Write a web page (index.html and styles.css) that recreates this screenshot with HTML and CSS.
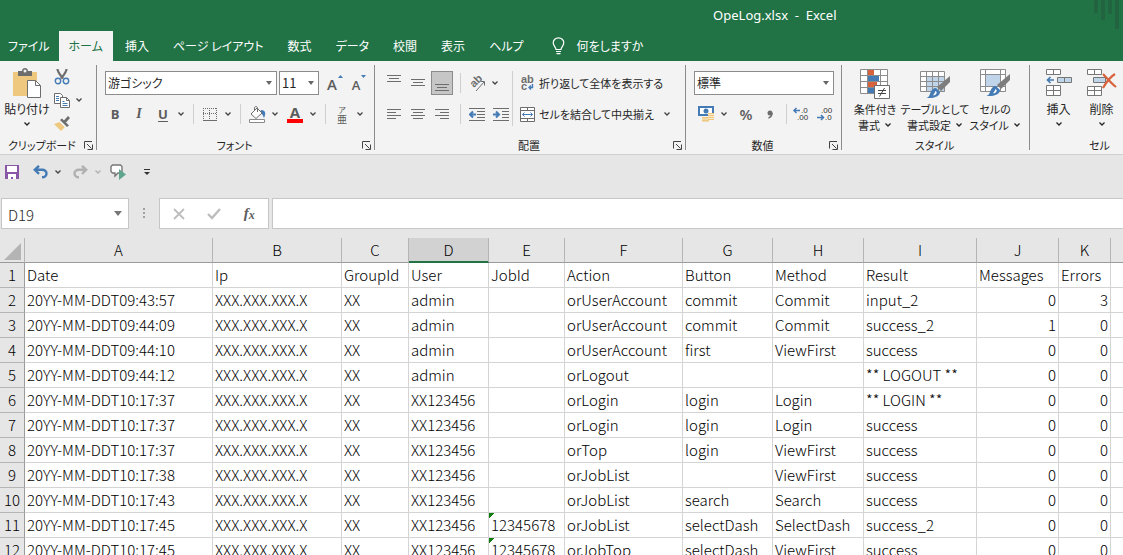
FILE: index.html
```html
<!DOCTYPE html>
<html lang="ja">
<head>
    <meta charset="UTF-8">
    <meta name="viewport" content="width=device-width, initial-scale=1.0">
    <title>OpeLog.xlsx - Excel</title>
    <link rel="stylesheet" href="styles.css">
</head>
<body>
    <!-- shared icons -->
    <svg class="defs" width="0" height="0">
        <symbol id="chev" viewBox="0 0 8 6"><path d="M1.500 1.500L4 4l2.500-2.500" fill="none" stroke="currentColor" stroke-width="1.300"/></symbol>
        <symbol id="launch" viewBox="0 0 9 9"><path d="M.5 7.500V.5H8M3 3l4.500 4.500M8.500 3.500v5H3.500" fill="none" stroke="#444"/></symbol>
        <symbol id="brush" viewBox="0 0 24 24">
            <path d="M24 1v6l-9 9-4-4z" fill="#7d7d7d"/>
            <path d="M10 13l4 4c0 4-5 6.500-13.500 6 3-1 3-3 4-5.500 1-2.500 3-4.500 5.500-4.500z" fill="#447bb5"/>
            <path d="M9.500 16c1.800.8 1.500 3-.5 4-.8.4-1.500.4-2 .2 1.200-1 1.700-2.400 2.500-4.200z" fill="#fff"/>
        </symbol>
    </svg>

    <header class="title-bar">
        <h1>OpeLog.xlsx&nbsp; -&nbsp; Excel</h1>
        <svg class="motif" width="29" height="30" viewBox="0 0 29 30"><path d="M0 0h4v13H0zM7 0h4v20H7zM14 0h4v14h-4zM21 0h4v29h-4z" fill="#22643f"/></svg>
    </header>

    <nav class="tabs">
        <button class="tab file">ファイル</button>
        <button class="tab active">ホーム</button>
        <button class="tab">挿入</button>
        <button class="tab">ページ レイアウト</button>
        <button class="tab">数式</button>
        <button class="tab">データ</button>
        <button class="tab">校閲</button>
        <button class="tab">表示</button>
        <button class="tab">ヘルプ</button>
        <button class="tab tell">
            <svg width="13" height="18" viewBox="0 0 13 18" fill="none" stroke="#fff" stroke-width="1.200"><path d="M4 12.500c0-2.500-2.800-3.500-2.800-6.700a5.300 5 0 0 1 10.600 0c0 3.200-2.800 4.200-2.800 6.700zM4 14.500h5M4.500 16.700h4"/></svg>
            何をしますか
        </button>
    </nav>

    <div class="ribbon">
        <section class="group clipboard">
            <div class="group-body">
                <button class="big">
                    <svg width="30" height="32" viewBox="0 0 30 32">
                        <path d="M1 4h24v24H1z" fill="#edc87e"/>
                        <path d="M6 3h4c0-4 6-4 6 0h4v5H6z" fill="#6d6d6d"/><circle cx="13" cy="3" r="1.500" fill="#f3f3f3"/>
                        <path d="M15.500 12.500h8l5 5v12h-13z" fill="#fff" stroke="#6d6d6d"/><path d="M23.500 12.500v5h5" fill="none" stroke="#6d6d6d"/>
                    </svg>
                    <span>貼り付け</span>
                    <svg class="chev"><use href="#chev"/></svg>
                </button>
                <div class="clip-side">
                    <button class="icon" aria-label="切り取り">
                        <svg width="16" height="16" viewBox="0 0 16 16"><path d="M3.500 0c0 3 2 5 5.500 9.500M12.500 0c0 3-2 5-5.500 9.500" fill="none" stroke="#6d6d6d" stroke-width="2.200"/><g fill="none" stroke="#447bb5" stroke-width="1.400"><circle cx="4" cy="12" r="2.700"/><circle cx="12" cy="12" r="2.700"/></g></svg>
                    </button>
                    <button class="icon" aria-label="コピー">
                        <svg width="16" height="15" viewBox="0 0 16 15"><g fill="#fff" stroke="#6d6d6d"><path d="M.5.5h6l2 2v8h-8z"/><path d="M6.500 4.500h6l3 3v7h-9z"/><path d="M12.500 4.500v3h3" fill="none"/></g><path d="M2 3.500h3M2 5.500h3M2 7.500h3M8.500 8.500h2M8.500 10.500h5M8.500 12.500h5" stroke="#447bb5"/></svg>
                    </button>
                    <button class="drop" aria-label="コピーのオプション"><svg class="chev"><use href="#chev"/></svg></button>
                    <button class="icon" aria-label="書式のコピー">
                        <svg width="16" height="15" viewBox="0 0 16 15"><path d="M0 8l6-2 5 5-4 4z" fill="#edc87e"/><path d="M6 4l2-1.500 7 7L13 11z" fill="#6d6d6d"/><path d="M9.500 5L14 0l2 2-4.500 5z" fill="#6d6d6d"/><path d="M5.500 5.500l6 6" stroke="#f3f3f3"/></svg>
                    </button>
                </div>
            </div>
            <footer><span>クリップボード</span><button aria-label="クリップボードの設定"><svg width="9" height="9"><use href="#launch"/></svg></button></footer>
        </section>

        <section class="group font">
            <div class="group-body rows">
                <div class="row">
                    <div class="combo family"><select aria-label="フォント名"><option>游ゴシック</option></select></div>
                    <div class="combo size"><select aria-label="フォント サイズ"><option>11</option></select></div>
                    <button class="icon letter grow" aria-label="フォント サイズの拡大"><b>A</b><svg width="5" height="3" viewBox="0 0 5 3"><path d="M0 3l2.500-3L5 3z" fill="#447bb5"/></svg></button>
                    <button class="icon letter shrink" aria-label="フォント サイズの縮小"><b>A</b><svg width="5" height="3" viewBox="0 0 5 3"><path d="M0 0h5L2.500 3z" fill="#447bb5"/></svg></button>
                </div>
                <div class="row format">
                    <button class="icon bold">B</button>
                    <button class="icon italic">I</button>
                    <button class="icon underline">U</button>
                    <button class="drop" aria-label="下線"><svg class="chev"><use href="#chev"/></svg></button>
                    <i class="sep"></i>
                    <button class="icon" aria-label="罫線"><svg width="14" height="13" viewBox="0 0 14 13" fill="none" stroke="#6d6d6d"><path d="M0 .5h14M.5 0v11M6.500 0v11M13.500 0v11M0 5.500h14" stroke-dasharray="1 1"/><path d="M0 12.500h14"/></svg></button>
                    <button class="drop" aria-label="罫線の種類"><svg class="chev"><use href="#chev"/></svg></button>
                    <i class="sep"></i>
                    <button class="icon" aria-label="塗りつぶしの色"><svg width="17" height="17" viewBox="0 0 17 17"><path d="M12 4c5 0 5 4 3 8-1-2-1-4-4-5z" fill="#447bb5"/><path d="M2 8l6-6 5 5-6 5.500z" fill="#fff" stroke="#6d6d6d"/><path d="M5.500 5V2c0-2 3-2 3 0v4" fill="none" stroke="#6d6d6d"/><path d="M.5 13.500h15v3H.5z" fill="#fff" stroke="#8a8a8a"/></svg></button>
                    <button class="drop" aria-label="塗りつぶしの色の一覧"><svg class="chev"><use href="#chev"/></svg></button>
                    <button class="icon font-color">A</button>
                    <button class="drop" aria-label="フォントの色"><svg class="chev"><use href="#chev"/></svg></button>
                    <i class="sep"></i>
                    <button class="icon ruby"><small>ア</small><span>亜</span></button>
                    <button class="drop" aria-label="ふりがな"><svg class="chev"><use href="#chev"/></svg></button>
                </div>
            </div>
            <footer><span>フォント</span><button aria-label="フォントの設定"><svg width="9" height="9"><use href="#launch"/></svg></button></footer>
        </section>

        <section class="group align">
            <div class="group-body">
                <div class="rows align-left">
                    <div class="row">
                        <button class="icon" aria-label="上揃え"><svg width="14" height="20" viewBox="0 0 14 20" stroke="#6d6d6d"><path d="M0 2.500h14M2 5.500h10M0 8.500h14"/></svg></button>
                        <button class="icon" aria-label="上下中央揃え"><svg width="14" height="20" viewBox="0 0 14 20" stroke="#6d6d6d"><path d="M0 6.500h14M2 9.500h10M0 12.500h14"/></svg></button>
                        <button class="icon pressed" aria-label="下揃え" aria-pressed="true"><svg width="14" height="20" viewBox="0 0 14 20" stroke="#6d6d6d"><path d="M0 11.500h14M2 14.500h10M0 17.500h14"/></svg></button>
                        <i class="sep"></i>
                        <button class="icon" aria-label="方向"><svg class="lettering" width="17" height="17" viewBox="0 0 17 17"><text x="0" y="0" transform="translate(5 13) rotate(-45)" font-size="11" font-weight="700" fill="#6d6d6d">ab</text><path d="M7 16L15 7M11.500 6.500h4v4" fill="none" stroke="#6d6d6d"/></svg></button>
                        <button class="drop" aria-label="方向の一覧"><svg class="chev"><use href="#chev"/></svg></button>
                    </div>
                    <div class="row">
                        <button class="icon" aria-label="左揃え"><svg width="14" height="11" viewBox="0 0 14 11" stroke="#6d6d6d"><path d="M0 .5h14M0 3.500h9M0 6.500h14M0 9.500h9"/></svg></button>
                        <button class="icon" aria-label="中央揃え"><svg width="14" height="11" viewBox="0 0 14 11" stroke="#6d6d6d"><path d="M0 .5h14M2 3.500h10M0 6.500h14M2 9.500h10"/></svg></button>
                        <button class="icon" aria-label="右揃え"><svg width="14" height="11" viewBox="0 0 14 11" stroke="#6d6d6d"><path d="M0 .5h14M5 3.500h9M0 6.500h14M5 9.500h9"/></svg></button>
                        <i class="sep"></i>
                        <button class="icon" aria-label="インデントを減らす"><svg width="16" height="13" viewBox="0 0 16 13"><path d="M0 .5h16M8 3.500h8M8 6.500h8M8 9.500h8M0 12.500h16" stroke="#6d6d6d"/><path d="M7 6.500H1M4 3.500l-3 3 3 3" fill="none" stroke="#447bb5" stroke-width="2"/></svg></button>
                        <button class="icon" aria-label="インデントを増やす"><svg width="16" height="13" viewBox="0 0 16 13"><path d="M0 .5h16M9 3.500h7M9 6.500h7M9 9.500h7M0 12.500h16" stroke="#6d6d6d"/><path d="M0 6.500h6M3 3.500l3 3-3 3" fill="none" stroke="#447bb5" stroke-width="2"/></svg></button>
                    </div>
                </div>
                <i class="sep tall"></i>
                <div class="rows">
                    <div class="row"><button class="wide"><svg class="lettering" width="15" height="16" viewBox="0 0 15 16"><g font-size="11" font-weight="700" fill="#6d6d6d"><text x="1" y="8">ab</text><text x="1" y="15">c</text></g><path d="M12.500 9v3.500H9M11 10.500l-2 2 2 2" fill="none" stroke="#447bb5" stroke-width="1.400"/></svg>折り返して全体を表示する</button></div>
                    <div class="row"><button class="wide"><svg width="15" height="15" viewBox="0 0 15 15"><path d="M.5.5h14v14H.5zM.5 3.500h14M.5 11.500h14M7.500 .5v3M7.500 11.500v3" fill="#fff" stroke="#6d6d6d"/><path d="M2.500 7.500h10M4.500 5.500l-2 2 2 2M10.500 5.500l2 2-2 2" fill="none" stroke="#447bb5"/></svg>セルを結合して中央揃え</button><button class="drop merge-drop" aria-label="結合の種類"><svg class="chev"><use href="#chev"/></svg></button></div>
                </div>
            </div>
            <footer><span>配置</span><button aria-label="配置の設定"><svg width="9" height="9"><use href="#launch"/></svg></button></footer>
        </section>

        <section class="group number">
            <div class="group-body rows">
                <div class="row"><div class="combo format-name"><select aria-label="表示形式"><option>標準</option></select></div></div>
                <div class="row">
                    <button class="icon" aria-label="通貨表示形式"><svg width="17" height="16" viewBox="0 0 17 16"><path d="M1 1h14v8H1z" fill="#fff" stroke="#447bb5" stroke-width="2"/><circle cx="8" cy="5" r="2.500" fill="#447bb5"/><path d="M10 7h6v7h-6zM4 11h7v4.500H4z" fill="#edc87e"/><path d="M10 8.500h6M10 10.500h6M10 12.500h6M4 13h6" stroke="#f8eacb"/></svg></button>
                    <button class="drop" aria-label="通貨の一覧"><svg class="chev"><use href="#chev"/></svg></button>
                    <button class="icon percent">%</button>
                    <button class="icon comma" aria-label="桁区切りスタイル"><svg width="6" height="9" viewBox="0 0 6 9"><circle cx="3" cy="3" r="2.500" fill="#6d6d6d"/><path d="M5 3c0 3-1 4-3.500 5" fill="none" stroke="#6d6d6d" stroke-width="1.500"/></svg></button>
                    <i class="sep"></i>
                    <button class="icon" aria-label="小数点以下の表示桁数を増やす"><svg class="lettering" width="16" height="14" viewBox="0 0 16 14"><g font-size="8" fill="#333"><text x="8" y="6">.0</text><text x="4" y="13">.00</text></g><path d="M7 3.500H1M3.500 1L1 3.500 3.500 6" fill="none" stroke="#447bb5" stroke-width="1.500"/></svg></button>
                    <button class="icon" aria-label="小数点以下の表示桁数を減らす"><svg class="lettering" width="16" height="14" viewBox="0 0 16 14"><g font-size="8" fill="#333"><text x="4" y="6">.00</text><text x="8" y="13">.0</text></g><path d="M0 10.500h6.500M4 8l2.500 2.500L4 13" fill="none" stroke="#447bb5" stroke-width="1.500"/></svg></button>
                </div>
            </div>
            <footer><span>数値</span><button aria-label="数値の設定"><svg width="9" height="9"><use href="#launch"/></svg></button></footer>
        </section>

        <section class="group style">
            <div class="group-body">
                <button class="big cond">
                    <svg width="30" height="32" viewBox="0 0 30 32">
                        <path d="M.5 1.500h27v24H.5z" fill="#fff"/>
                        <path d="M8 2h6v5H8zM8 14h9v5H8z" fill="#d8623c"/><path d="M8 8h11v5H8zM8 20h6v5H8z" fill="#447bb5"/>
                        <path d="M.5 1.500h27v24H.5zM.5 7.500h27M.5 13.500h27M.5 19.500h27M7.500 1.500v24M20.500 1.500v24" fill="none" stroke="#8c8c8c"/>
                        <path d="M14.500 17.500h15v13h-15z" fill="#fff" stroke="#6d6d6d"/><path d="M18 22.500h8M18 25.500h8M24.500 20l-5 8.500" stroke="#444"/>
                    </svg>
                    <span>条件付き</span><span>書式<svg class="chev"><use href="#chev"/></svg></span>
                </button>
                <button class="big table-fmt">
                    <svg width="30" height="32" viewBox="0 0 30 32">
                        <path d="M.5 3.500h24v20H.5z" fill="#fff"/><path d="M7 9h18v15H7z" fill="#c0d4ea"/>
                        <path d="M.5 3.500h24v20H.5zM.5 8.500h24M.5 13.500h24M.5 18.500h24M6.500 3.500v20M12.500 3.500v20M18.500 3.500v20" fill="none" stroke="#8c8c8c"/>
                        <use href="#brush" x="6" y="7" width="24" height="24"/>
                    </svg>
                    <span>テーブルとして</span><span>書式設定<svg class="chev"><use href="#chev"/></svg></span>
                </button>
                <button class="big cell-fmt">
                    <svg width="30" height="32" viewBox="0 0 30 32">
                        <path d="M.5 1.500h25v22H.5z" fill="#fff"/><path d="M6 7h14v11H6z" fill="#c0d4ea"/>
                        <path d="M.5 1.500h25v22H.5zM.5 6.500h25M.5 18.500h25M5.500 1.500v22M20.500 1.500v22" fill="none" stroke="#8c8c8c"/>
                        <use href="#brush" x="6" y="5" width="24" height="24"/>
                    </svg>
                    <span>セルの</span><span>スタイル<svg class="chev"><use href="#chev"/></svg></span>
                </button>
            </div>
            <footer><span>スタイル</span></footer>
        </section>

        <section class="group cells">
            <div class="group-body">
                <button class="big">
                    <svg width="28" height="32" viewBox="0 0 28 32"><g fill="#fff" stroke="#777"><path d="M1.500 1.500h14v5h-14zM8.500 1.500v5M1.500 17.500h14v10h-14zM8.500 17.500v10M1.500 22.500h14"/><path d="M12.500 9.500h14v5h-14zM19.500 9.500v5" fill="#c0d4ea"/></g><path d="M9 12H2.500M5.500 9l-3 3 3 3" fill="none" stroke="#447bb5" stroke-width="1.700"/></svg>
                    <span>挿入</span><svg class="chev"><use href="#chev"/></svg>
                </button>
                <button class="big">
                    <svg width="30" height="32" viewBox="0 0 30 32"><g fill="#fff" stroke="#777"><path d="M.5 1.500h14v5H.5zM7.500 1.500v5M.5 18.500h14v9H.5zM7.500 18.500v9M.5 22.500h14"/><path d="M6.500 9.500h12v5h-12z" fill="#c0d4ea"/></g><path d="M16 6c4 4 8 9 13 13M28 6c-5 3-8 7-12 14" fill="none" stroke="#d8623c" stroke-width="2.200"/></svg>
                    <span>削除</span><svg class="chev"><use href="#chev"/></svg>
                </button>
            </div>
            <footer><span>セル</span></footer>
        </section>
    </div>

    <div class="quick-access">
        <button class="icon" aria-label="上書き保存"><svg width="14" height="14" viewBox="0 0 14 14"><path d="M0 0h14v14H0z" fill="#8a57a8"/><path d="M2 1h10v6H2zM3 9h8v5H8v-2H6v2H3z" fill="#fff"/></svg></button>
        <button class="icon undo" aria-label="元に戻す"><svg width="15" height="14" viewBox="0 0 15 14" fill="none" stroke="#447bb5" stroke-width="2.400"><path d="M6 .8L1.800 4.800 6 8.800M2 4.800h7c6 0 6 7.500 0 7.500"/></svg></button>
        <button class="drop" aria-label="元に戻す履歴"><svg class="chev"><use href="#chev"/></svg></button>
        <button class="icon redo" aria-label="やり直し"><svg width="15" height="14" viewBox="0 0 15 14" fill="none" stroke="#b1b1b1" stroke-width="2.400"><path d="M9 .8l4.200 4L9 8.800M13 4.800H6c-6 0-6 7.500 0 7.500"/></svg></button>
        <button class="drop muted" aria-label="やり直し履歴"><svg class="chev"><use href="#chev"/></svg></button>
        <button class="icon speak" aria-label="読み上げ"><svg width="16" height="16" viewBox="0 0 16 16"><path d="M2.500 1h8l1.500 1.500v5L10.500 9H8l-3 3V9H2.500L1 7.500v-5z" fill="#fff" stroke="#777" stroke-width="1.400"/><path d="M9 5l7 5.500L9 16z" fill="#5fa58c"/></svg></button>
        <button class="drop customize" aria-label="クイック アクセスのカスタマイズ"><svg width="6" height="7" viewBox="0 0 6 7"><path d="M0 .5h6" stroke="#333"/><path d="M0 3h6L3 6z" fill="#333"/></svg></button>
    </div>

    <div class="formula-bar">
        <div class="combo name-box"><input type="text" value="D19" aria-label="名前ボックス"></div>
        <i class="grip"></i>
        <div class="formula-tools">
            <button aria-label="キャンセル"><svg width="12" height="12" viewBox="0 0 12 12" stroke="#bdbdbd" stroke-width="1.800"><path d="M1 1l10 10M11 1L1 11"/></svg></button>
            <button aria-label="入力"><svg width="14" height="12" viewBox="0 0 14 12" fill="none" stroke="#bdbdbd" stroke-width="2.400"><path d="M1 6l4 4L13 1"/></svg></button>
            <button class="fx" aria-label="関数の挿入">f<small>x</small></button>
        </div>
        <input class="formula" type="text" aria-label="数式バー">
    </div>

    <main class="sheet">
        <table>
            <colgroup><col class="c-row"><col class="c-a"><col class="c-b"><col class="c-c"><col class="c-d"><col class="c-e"><col class="c-f"><col class="c-g"><col class="c-h"><col class="c-i"><col class="c-j"><col class="c-k"><col></colgroup>
            <thead>
                <tr><th class="corner"><svg width="17" height="17" viewBox="0 0 17 17"><path d="M17 0v17H0z" fill="#b4b4b4"/></svg></th><th>A</th><th>B</th><th>C</th><th class="current">D</th><th>E</th><th>F</th><th>G</th><th>H</th><th>I</th><th>J</th><th>K</th><th></th></tr>
            </thead>
            <tbody>
                <tr><th>1</th><td>Date</td><td>Ip</td><td>GroupId</td><td>User</td><td>JobId</td><td>Action</td><td>Button</td><td>Method</td><td>Result</td><td>Messages</td><td>Errors</td><td></td></tr>
                <tr><th>2</th><td>20YY-MM-DDT09:43:57</td><td>XXX.XXX.XXX.X</td><td>XX</td><td>admin</td><td></td><td>orUserAccount</td><td>commit</td><td>Commit</td><td>input_2</td><td class="num">0</td><td class="num">3</td><td></td></tr>
                <tr><th>3</th><td>20YY-MM-DDT09:44:09</td><td>XXX.XXX.XXX.X</td><td>XX</td><td>admin</td><td></td><td>orUserAccount</td><td>commit</td><td>Commit</td><td>success_2</td><td class="num">1</td><td class="num">0</td><td></td></tr>
                <tr><th>4</th><td>20YY-MM-DDT09:44:10</td><td>XXX.XXX.XXX.X</td><td>XX</td><td>admin</td><td></td><td>orUserAccount</td><td>first</td><td>ViewFirst</td><td>success</td><td class="num">0</td><td class="num">0</td><td></td></tr>
                <tr><th>5</th><td>20YY-MM-DDT09:44:12</td><td>XXX.XXX.XXX.X</td><td>XX</td><td>admin</td><td></td><td>orLogout</td><td></td><td></td><td>** LOGOUT **</td><td class="num">0</td><td class="num">0</td><td></td></tr>
                <tr><th>6</th><td>20YY-MM-DDT10:17:37</td><td>XXX.XXX.XXX.X</td><td>XX</td><td>XX123456</td><td></td><td>orLogin</td><td>login</td><td>Login</td><td>** LOGIN **</td><td class="num">0</td><td class="num">0</td><td></td></tr>
                <tr><th>7</th><td>20YY-MM-DDT10:17:37</td><td>XXX.XXX.XXX.X</td><td>XX</td><td>XX123456</td><td></td><td>orLogin</td><td>login</td><td>Login</td><td>success</td><td class="num">0</td><td class="num">0</td><td></td></tr>
                <tr><th>8</th><td>20YY-MM-DDT10:17:37</td><td>XXX.XXX.XXX.X</td><td>XX</td><td>XX123456</td><td></td><td>orTop</td><td>login</td><td>ViewFirst</td><td>success</td><td class="num">0</td><td class="num">0</td><td></td></tr>
                <tr><th>9</th><td>20YY-MM-DDT10:17:38</td><td>XXX.XXX.XXX.X</td><td>XX</td><td>XX123456</td><td></td><td>orJobList</td><td></td><td>ViewFirst</td><td>success</td><td class="num">0</td><td class="num">0</td><td></td></tr>
                <tr><th>10</th><td>20YY-MM-DDT10:17:43</td><td>XXX.XXX.XXX.X</td><td>XX</td><td>XX123456</td><td></td><td>orJobList</td><td>search</td><td>Search</td><td>success</td><td class="num">0</td><td class="num">0</td><td></td></tr>
                <tr><th>11</th><td>20YY-MM-DDT10:17:45</td><td>XXX.XXX.XXX.X</td><td>XX</td><td>XX123456</td><td class="warn">12345678</td><td>orJobList</td><td>selectDash</td><td>SelectDash</td><td>success_2</td><td class="num">0</td><td class="num">0</td><td></td></tr>
                <tr><th>12</th><td>20YY-MM-DDT10:17:45</td><td>XXX.XXX.XXX.X</td><td>XX</td><td>XX123456</td><td class="warn">12345678</td><td>orJobTop</td><td>selectDash</td><td>ViewFirst</td><td>success</td><td class="num">0</td><td class="num">0</td><td></td></tr>
            </tbody>
        </table>
    </main>
</body>
</html>
```
FILE: styles.css
```css
:root {
    --green: #217346;
    --ribbon: #f3f3f3;
    --chrome: #e6e6e6;
    --line: #d4d4d4;
    --header-line: #9b9b9b;
    --icon: #5c5c5c;
    --text: #262626;
}

* {
    margin: 0;
    padding: 0;
    box-sizing: border-box;
}

body {
    display: flex;
    flex-direction: column;
    height: 100vh;
    overflow: hidden;
    background-color: var(--chrome);
    color: var(--text);
    font-family: "Noto Sans CJK JP", sans-serif;
    font-size: 12px;
    line-height: 16px;
    font-feature-settings: "palt";
}

button,
input,
select {
    border: none;
    background: none;
    color: inherit;
    font: inherit;
    font-feature-settings: inherit;
}

button {
    display: inline-flex;
    align-items: center;
    justify-content: center;
    flex: none;
    white-space: nowrap;
}

svg {
    display: block;
    flex: none;
}

.defs {
    position: absolute;
}

.lettering {
    overflow: visible;
    font-family: "Liberation Sans", sans-serif;
}

.chev {
    width: 8px;
    height: 6px;
}

/* title and tabs */
.title-bar {
    position: relative;
    flex: none;
    height: 31px;
    padding: 6px 0 0 63.5%;
    background-color: var(--green);
    color: #fff;
}

.title-bar h1 {
    font: 400 13px/18px "Noto Sans", sans-serif;
}

.motif {
    position: absolute;
    top: 0;
    right: 0;
}

.tabs {
    display: flex;
    flex: none;
    height: 30px;
    background-color: var(--green);
}

.tab {
    padding: 0 12px;
    color: #fff;
}

.tab.file {
    padding: 0 9px 0 8px;
}

.tab.active {
    padding: 0 10px;
    background-color: var(--ribbon);
    color: var(--green);
}

.tab.tell {
    gap: 12px;
    margin-left: 4px;
}

/* ribbon */
.ribbon {
    display: flex;
    flex: none;
    height: 94px;
    padding-top: 4px;
    overflow: hidden;
    background-color: var(--ribbon);
    border-bottom: 1px solid #d0d0d0;
}

.group {
    display: flex;
    flex: none;
    flex-direction: column;
    height: 85px;
    border-right: 1px solid #8c8c8c;
}

.group-body {
    display: flex;
    flex: 1;
}

.group footer {
    display: grid;
    grid-template-columns: 12px 1fr 12px;
    align-items: center;
    height: 16px;
    margin-bottom: -3px;
    padding-right: 2px;
    font-size: 11px;
    text-align: center;
}

.group footer span {
    grid-column: 2;
}

.clipboard {
    width: 97px;
}

.clipboard footer {
    grid-template-columns: 0 1fr 12px;
    padding-left: 8px;
    text-align: left;
}

.font {
    width: 278px;
}

.align {
    width: 311px;
}

.number {
    width: 156px;
}

.style {
    width: 188px;
}

.cells {
    width: 142px;
}

.rows {
    display: flex;
    flex-direction: column;
    gap: 7px;
    padding-top: 6px;
}

.group-body.rows {
    padding-left: 8px;
}

.row {
    display: flex;
    align-items: center;
    height: 24px;
}

.icon {
    width: 24px;
    height: 24px;
    color: var(--icon);
}

.drop {
    width: 12px;
    height: 24px;
    color: #444;
}

.drop.muted {
    color: #b1b1b1;
}

.sep {
    flex: none;
    width: 1px;
    height: 20px;
    margin: 0 4px 0 6px;
    background-color: #cfcfcf;
}

.sep.tall {
    height: 55px;
    margin: 6px 7px 0 0;
}

.big {
    flex-direction: column;
    justify-content: flex-start;
    padding-top: 3px;
}

.big > svg:first-child {
    margin-bottom: 1px;
}

.big span {
    display: flex;
    align-items: center;
    gap: 4px;
}

.big > .chev {
    margin-top: 4px;
}

.clipboard .big {
    width: 54px;
}

.clip-side {
    display: grid;
    grid-template-columns: 16px 18px;
    grid-auto-rows: 23px;
    align-content: start;
}

.clip-side .icon {
    grid-column: 1;
    width: 16px;
}

.clip-side .drop {
    width: 18px;
}

.combo {
    position: relative;
    height: 24px;
    border: 1px solid #8c8c8c;
    background-color: #fff;
}

.combo::after {
    content: "";
    position: absolute;
    top: 9px;
    right: 4px;
    border: 3px solid transparent;
    border-top: 4px solid #666;
    border-bottom: 0;
    pointer-events: none;
}

.combo select,
.combo input {
    appearance: none;
    display: block;
    width: 100%;
    height: 100%;
    padding: 0 2px;
}

.family {
    width: 172px;
    margin-right: 2px;
}

.size {
    width: 40px;
    margin-right: 4px;
}

.size select {
    font-size: 13px;
}

.format-name {
    width: 140px;
}

.letter {
    gap: 1px;
    align-items: flex-start;
    padding-top: 4px;
}

.grow b {
    font: 600 15px/18px "Open Sans", sans-serif;
}

.shrink b {
    font: 600 13px/20px "Open Sans", sans-serif;
}

.format {
    margin-left: -2px;
}

.bold,
.underline {
    font: 700 13px "Open Sans", sans-serif;
}

.underline {
    text-decoration: underline;
    text-underline-offset: 2px;
}

.italic {
    font: italic 700 14px "Liberation Serif", serif;
}

.font-color {
    width: 16px;
    height: 17px;
    margin: 0 4px 0 6px;
    border-bottom: 4px solid #f00;
    font: 700 15px/13px "Open Sans", sans-serif;
}

.ruby {
    flex-direction: column;
    font-size: 10px;
    line-height: 9px;
}

.ruby small {
    font-size: 8px;
    line-height: 8px;
}

.align-left {
    width: 137px;
}

.align-left .row {
    padding-left: 7px;
}

.pressed {
    width: 22px;
    margin: 0 1px;
    border: 1px solid #8c8c8c;
    background-color: #c6c6c6;
}

.wide {
    gap: 4px;
    height: 24px;
    font-size: 11px;
}

.merge-drop {
    margin-left: 7px;
}

.percent {
    font: 600 15px "Open Sans", sans-serif;
    margin-left: 4px;
}

.comma + .sep {
    margin: 0 2px 0 4px;
}

.style .big {
    width: 60px;
    font-size: 11px;
}

.style .cond {
    margin-left: 3px;
}

.cells .big {
    width: 43px;
}

.cells .big:first-child {
    margin-left: 7px;
}

/* quick access toolbar */
.quick-access {
    display: flex;
    align-items: center;
    flex: none;
    height: 34px;
}

.undo,
.redo {
    margin-left: 4px;
}

.speak {
    margin-left: 2px;
}

.customize {
    margin-left: 11px;
}

/* formula bar */
.formula-bar {
    display: flex;
    flex: none;
    height: 31px;
    margin: 9px 0;
    padding-left: 1px;
}

.name-box {
    width: 128px;
    height: 31px;
    border-color: #c6c6c6;
}

.name-box::after {
    top: 12px;
    right: 6px;
    border-width: 5px 4px 0;
    border-top-color: #777;
}

.name-box input {
    padding: 2px 6px 0;
    font-size: 15px;
    font-weight: 300;
}

.grip {
    width: 2px;
    height: 11px;
    margin: 10px 14px;
    background: repeating-linear-gradient(#a0a0a0 0 2px, transparent 2px 4px);
}

.formula-tools {
    display: flex;
    flex: none;
    width: 110px;
    padding: 0 1px;
    border: 1px solid #c6c6c6;
    background-color: #fff;
}

.formula-tools button {
    flex: 1;
}

.fx {
    color: var(--icon);
    font: italic 700 15px "Liberation Serif", serif;
}

.fx small {
    padding-top: 3px;
    font-size: 12px;
}

.formula {
    flex: 1;
    min-width: 0;
    margin-left: 3px;
    padding: 0 6px;
    border: 1px solid #c6c6c6;
    border-right: none;
    background-color: #fff;
}

/* worksheet */
.sheet {
    flex: 1;
    min-height: 0;
    overflow: hidden;
}

table {
    width: 100%;
    table-layout: fixed;
    border-collapse: separate;
    border-spacing: 0;
    font-size: 15px;
    font-weight: 300;
    line-height: 24px;
    font-feature-settings: normal;
    color: #000;
}

.c-row { width: 25px; }
.c-a { width: 188px; }
.c-b { width: 129px; }
.c-c { width: 67px; }
.c-d { width: 80px; }
.c-e { width: 76px; }
.c-f { width: 118px; }
.c-g { width: 90px; }
.c-h { width: 91px; }
.c-i { width: 113px; }
.c-j { width: 82px; }
.c-k { width: 52px; }

th,
td {
    height: 25px;
    border-right: 1px solid var(--line);
    border-bottom: 1px solid var(--line);
    white-space: nowrap;
}

td {
    padding: 0 2px;
    background-color: #fff;
}

th {
    border-color: #b5b5b5;
    font-weight: 300;
    text-align: center;
}

thead th {
    border-bottom-color: var(--header-line);
}

tbody th {
    border-right-color: var(--header-line);
}

th:last-child,
td:last-child {
    border-right: none;
}

.corner svg {
    margin: 2px 0 0 4px;
}

.current {
    border-bottom: 2px solid var(--green);
    background-color: #d2d2d2;
    line-height: 23px;
}

.num {
    text-align: right;
}

.warn {
    background-image: linear-gradient(135deg, #107c10 4px, transparent 4px);
}
```
